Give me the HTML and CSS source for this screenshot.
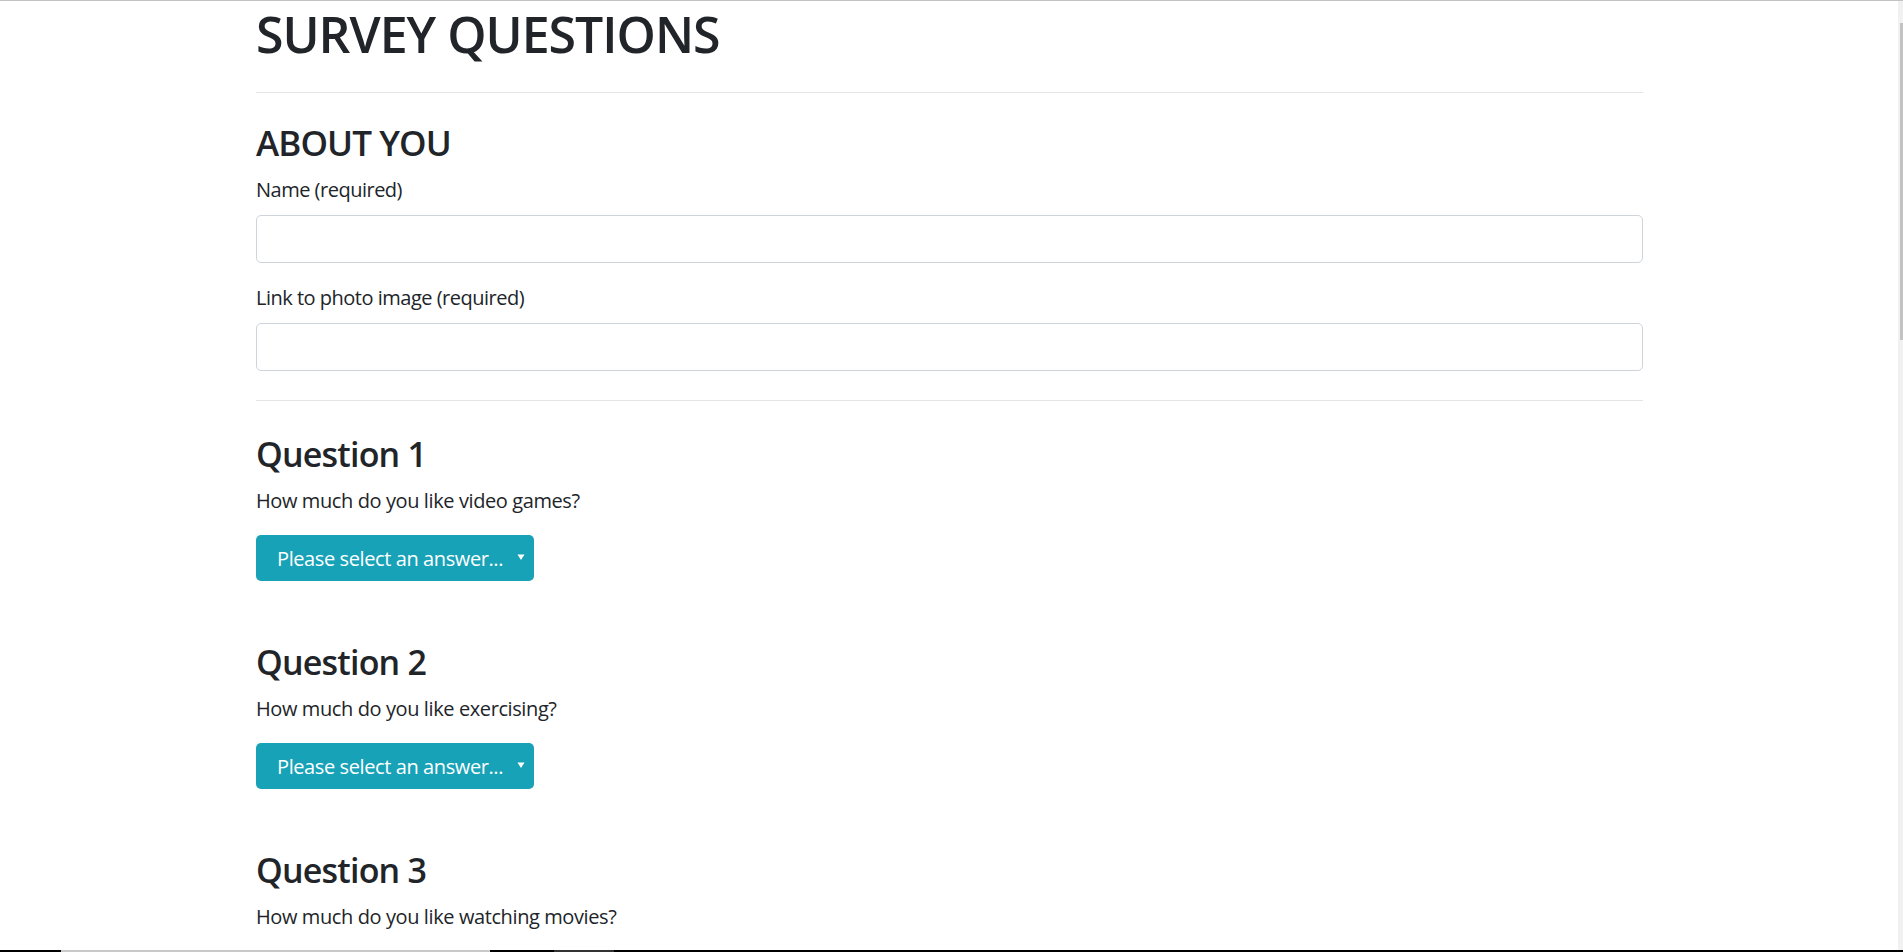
FILE: index.html
```html
<!DOCTYPE html>
<html lang="en">
<head>
<meta charset="utf-8">
<title>Survey Questions</title>
<link rel="stylesheet" href="styles.css">
</head>
<body>
<div class="window-top"></div>
<main class="container">
  <h1 class="page-title">SURVEY QUESTIONS</h1>
  <hr class="rule rule-top">
  <section class="about">
    <h3 class="section-title">ABOUT YOU</h3>
    <div class="form-group">
      <label class="label" for="name">Name (required)</label>
      <input class="input" id="name" type="text">
    </div>
    <div class="form-group last">
      <label class="label" for="photo">Link to photo image (required)</label>
      <input class="input" id="photo" type="text">
    </div>
  </section>
  <hr class="rule rule-mid">
  <div class="questions">
    <section class="question">
      <h2 class="question-title">Question 1</h2>
      <p class="question-text">How much do you like video games?</p>
      <div class="answer-select"><span class="answer-text">Please select an answer...</span><svg class="caret" width="8" height="8" viewBox="0 0 8 8"><path d="M0.5 1.5 L7.5 1.5 L4 7 Z" fill="#ffffff"/></svg></div>
    </section>
    <section class="question">
      <h2 class="question-title">Question 2</h2>
      <p class="question-text">How much do you like exercising?</p>
      <div class="answer-select"><span class="answer-text">Please select an answer...</span><svg class="caret" width="8" height="8" viewBox="0 0 8 8"><path d="M0.5 1.5 L7.5 1.5 L4 7 Z" fill="#ffffff"/></svg></div>
    </section>
    <section class="question">
      <h2 class="question-title">Question 3</h2>
      <p class="question-text">How much do you like watching movies?</p>
      <div class="answer-select"><span class="answer-text">Please select an answer...</span><svg class="caret" width="8" height="8" viewBox="0 0 8 8"><path d="M0.5 1.5 L7.5 1.5 L4 7 Z" fill="#ffffff"/></svg></div>
    </section>
  </div>
</main>
<div class="scrollbar"><div class="scrollbar-thumb"></div></div>
<div class="taskbar"><span class="task-seg seg-a"></span><span class="task-seg seg-b"></span></div>
</body>
</html>
```
FILE: styles.css
```css
html, body {
  margin: 0;
  padding: 0;
  background: #ffffff;
}
body {
  padding-right: 4px;
  height: 952px;
  overflow: hidden;
  font-family: "Open Sans", "Noto Sans", sans-serif;
  color: #212529;
  font-size: 20px;
  line-height: 30px;
}
.window-top {
  position: fixed;
  top: 0;
  left: 0;
  right: 0;
  height: 1px;
  background: #c3c3c3;
}
.container {
  width: 1387px;
  margin: 0 auto;
}
.page-title {
  margin: 4px 0 0;
  font-size: 50px;
  line-height: 60px;
  font-weight: 600;
  letter-spacing: -1px;
}
.rule {
  border: 0;
  border-top: 1px solid #e5e5e5;
  height: 0;
  margin: 0;
}
.rule-top {
  margin-top: 28px;
}
.section-title {
  margin: 29px 0 11px;
  font-size: 35px;
  line-height: 42px;
  font-weight: 600;
  letter-spacing: -0.9px;
}
.form-group {
  margin-bottom: 20px;
}
.form-group.last {
  margin-bottom: 0;
}
.label {
  display: block;
  margin-bottom: 10px;
  letter-spacing: -0.5px;
}
.input {
  display: block;
  box-sizing: border-box;
  width: 100%;
  height: 48px;
  border: 1px solid #ced4da;
  border-radius: 5px;
  background: #ffffff;
  margin: 0;
  padding: 0 15px;
  font: inherit;
}
.rule-mid {
  margin-top: 29px;
}
.questions {
  margin-top: 33px;
}
.question {
  margin-bottom: 61px;
}
.question-title {
  margin: 0 0 11px;
  font-size: 34px;
  line-height: 41px;
  font-weight: 600;
  letter-spacing: -0.8px;
}
.question-text {
  margin: 0 0 19px;
  letter-spacing: -0.4px;
}
.answer-select {
  box-sizing: border-box;
  width: 278px;
  height: 46px;
  display: flex;
  align-items: center;
  justify-content: space-between;
  padding: 1px 9px 0 21px;
  background: #17a2b8;
  color: #ffffff;
  border-radius: 5px;
  line-height: 46px;
}
.answer-text {
  letter-spacing: -0.4px;
  white-space: nowrap;
}
.caret {
  display: block;
  margin-top: -3px;
}
.scrollbar {
  position: fixed;
  top: 1px;
  right: 0;
  bottom: 2px;
  width: 5px;
  background: #f1f1f1;
}
.scrollbar-thumb {
  margin-top: 22px;
  margin-left: 2px;
  width: 3px;
  height: 317px;
  background: #c2c2c2;
}
.taskbar {
  position: fixed;
  left: 0;
  right: 0;
  bottom: 0;
  height: 2px;
  background: #000000;
  display: flex;
}
.task-seg {
  display: block;
  height: 2px;
}
.seg-a {
  margin-left: 61px;
  width: 429px;
  background: #c8c8c8;
}
.seg-b {
  margin-left: 64px;
  width: 60px;
  background: #333333;
}
```
